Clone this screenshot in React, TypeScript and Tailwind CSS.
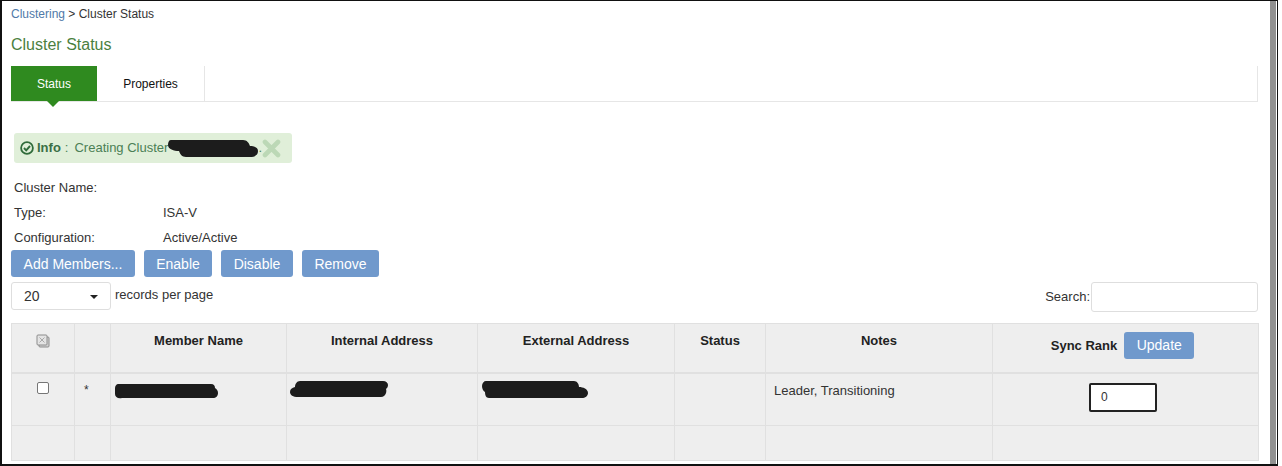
const buttons = [
  { label: "Add Members...", width: "w-[124px]" },
  { label: "Enable", width: "w-[68px]" },
  { label: "Disable", width: "w-[72px]" },
  { label: "Remove", width: "w-[77px]" },
];

const details = [
  { label: "Cluster Name:", value: "" },
  { label: "Type:", value: "ISA-V" },
  { label: "Configuration:", value: "Active/Active" },
];

const cellBorder = "border border-[#e0e0e0]";

function Scribble({ d, width, height }: { d: string; width: number; height: number }) {
  return (
    <svg width={width} height={height} viewBox={`0 0 ${width} ${height}`} className="block shrink-0">
      <path d={d} fill="#1c1c1c" />
    </svg>
  );
}

function SelectAllIcon() {
  return (
    <svg width="14" height="14" viewBox="0 0 14 14" className="block" fill="none">
      <rect x="3" y="3" width="10" height="10" rx="1" fill="#d2d2d2" stroke="#8c8c8c" />
      <rect x="1" y="1" width="10" height="10" rx="1" fill="#e4e4e4" stroke="#8c8c8c" />
      <path d="M3.5 3.5l5 5M8.5 3.5l-5 5" stroke="#a8a8a8" />
    </svg>
  );
}

function CheckCircle() {
  return (
    <svg width="14" height="14" viewBox="0 0 14 14" fill="none" className="block shrink-0 mr-[3px]">
      <circle cx="7" cy="7" r="5.9" stroke="#2f6b3a" strokeWidth="1.8" />
      <path d="M4 7l2.2 2.3L10 5" stroke="#2f6b3a" strokeWidth="1.9" />
    </svg>
  );
}

function CloseMark() {
  return (
    <svg width="19" height="19" viewBox="0 0 19 19" fill="none" className="block shrink-0">
      <path d="M3 3l13 13M16 3L3 16" stroke="#bcd8b6" strokeWidth="4.6" strokeLinecap="round" />
    </svg>
  );
}

export default function App() {
  return (
    <div className="w-[1282px] h-[466px] bg-white pr-[4px] overflow-hidden font-['Liberation_Sans',Arial,sans-serif]">
      <div className="h-[466px] flex border-t border-l-2 border-r border-b-2 border-[#111]">
        <div className="flex-1 min-w-0 pl-[9px] pr-[12px]">
          <div className="h-[25px] pt-[5px] text-[12px] leading-[16px] text-[#333]">
            <a className="text-[#4f79a8]">Clustering</a> &gt; Cluster Status
          </div>

          <h1 className="h-[40px] pt-[9px] text-[16px] leading-[20px] font-normal text-[#4b7f40]">Cluster Status</h1>

          {/* tabs */}
          <div className="relative flex h-[36px] border-b border-r border-[#e6e6e6] text-[12px]">
            <div className="w-[86px] h-[35px] flex items-center justify-center bg-[#2f8a1f] text-white">Status</div>
            <div className="w-[108px] h-[35px] flex items-center justify-center text-[#111] border-r border-[#e6e6e6]">
              Properties
            </div>
            <div className="absolute left-[36px] top-[35px] w-0 h-0 border-x-[6px] border-x-transparent border-t-[6px] border-t-[#2f8a1f]" />
          </div>

          <div className="pl-[3px] pt-[31px]">
            <div className="w-[278px] h-[30px] flex items-center pl-[6px] rounded-[3px] bg-[#e0efd9] text-[13px] text-[#4b8055]">
              <CheckCircle />
              <b className="text-[#3b6f46]">Info</b>
              <span className="ml-[4px] mr-[6px]">:</span>
              <span>Creating Cluster</span>
              <Scribble
                width={90}
                height={17}
                d="M3 0h72c4 0 6 3 7 6 3 0 8 1 8 5 0 4-3 6-8 6H18c-4 0-6-3-7-6-5 0-11-2-11-6 0-3 1-5 3-5z"
              />
              <span>.</span>
              <CloseMark />
            </div>

            <div className="pt-[12px] text-[13px] text-[#333]">
              {details.map((row) => (
                <div key={row.label} className="flex h-[25px] items-center">
                  <span className="w-[149px]">{row.label}</span>
                  <span>{row.value}</span>
                </div>
              ))}
            </div>
          </div>

          <div className="flex gap-[9px]">
            {buttons.map((btn) => (
              <button
                key={btn.label}
                className={`${btn.width} h-[27px] pt-[1px] rounded-[3px] bg-[#7099cc] text-[14px] text-white`}
              >
                {btn.label}
              </button>
            ))}
          </div>

          <div className="flex justify-between mt-[5px] text-[13px] text-[#333]">
            <div className="flex">
              <div className="w-[100px] h-[28px] flex items-center justify-between pl-[12px] pr-[12px] pt-[1px] rounded-[3px] border border-[#dedede] text-[14px]">
                20
                <span className="w-0 h-0 border-x-[4px] border-x-transparent border-t-[4px] border-t-[#222]" />
              </div>
              <span className="ml-[4px] mt-[4px] leading-[18px]">records per page</span>
            </div>
            <label className="flex">
              <span className="mt-[6px] leading-[18px]">Search:</span>
              <div className="ml-[1px] w-[167px] h-[30px] rounded-[3px] border border-[#dedede]" />
            </label>
          </div>

          <table className="mt-[11px] w-[1247px] table-fixed border-collapse bg-[#eeeeee] text-[13px] text-[#333]">
            <colgroup>
              <col className="w-[63px]" />
              <col className="w-[36px]" />
              <col className="w-[176px]" />
              <col className="w-[191px]" />
              <col className="w-[197px]" />
              <col className="w-[91px]" />
              <col className="w-[227px]" />
              <col className="w-[266px]" />
            </colgroup>
            <thead>
              <tr className="h-[49px] font-bold text-[13px] text-[#222]">
                <th className={`${cellBorder} border-b-2 align-top pt-[10px]`}>
                  <div className="flex justify-center">
                    <SelectAllIcon />
                  </div>
                </th>
                <th className={`${cellBorder} border-b-2`} />
                <th className={`${cellBorder} border-b-2 align-top pt-[7px]`}>Member Name</th>
                <th className={`${cellBorder} border-b-2 align-top pt-[7px]`}>Internal Address</th>
                <th className={`${cellBorder} border-b-2 align-top pt-[7px]`}>External Address</th>
                <th className={`${cellBorder} border-b-2 align-top pt-[7px]`}>Status</th>
                <th className={`${cellBorder} border-b-2 align-top pt-[7px]`}>Notes</th>
                <th className={`${cellBorder} border-b-2 align-top pt-[8px]`}>
                  <div className="flex items-center justify-center gap-[7px] pr-[6px]">
                    Sync Rank
                    <button className="w-[70px] h-[27px] rounded-[3px] bg-[#7099cc] text-[14px] font-normal text-white">
                      Update
                    </button>
                  </div>
                </th>
              </tr>
            </thead>
            <tbody>
              <tr className="h-[53px]">
                <td className={`${cellBorder} align-top pt-[8px]`}>
                  <div className="mx-auto w-[12px] h-[12px] rounded-[2px] border border-[#767676] bg-white" />
                </td>
                <td className={`${cellBorder} align-top pt-[7px] pl-[9px] text-[12px]`}>*</td>
                <td className={`${cellBorder} align-top pt-[9px] pl-[3px]`}>
                  <Scribble
                    width={104}
                    height={17}
                    d="M5 1h92c3 0 4 2 4 4 2 1 3 3 3 5 0 3-2 5-5 5H8c-4 1-7-1-7-4 0-2 0-3 0-5 0-3 1-5 4-5z"
                  />
                </td>
                <td className={`${cellBorder} align-top pt-[7px] pl-[3px]`}>
                  <Scribble
                    width={98}
                    height={18}
                    d="M10 0h83c3 0 5 2 5 4s-1 3-2 4c1 2 0 8-5 8H8c-5 0-8-2-8-5 0-3 2-4 5-5 0-3 2-6 5-6z"
                  />
                </td>
                <td className={`${cellBorder} align-top pt-[7px] pl-[4px]`}>
                  <Scribble
                    width={106}
                    height={18}
                    d="M4 0h88c3 0 5 3 5 6 4 0 9 2 9 6 0 3-3 5-6 5H7c-3 0-4-3-4-6C1 10 0 7 0 5c0-3 2-5 4-5z"
                  />
                </td>
                <td className={cellBorder} />
                <td className={`${cellBorder} align-top pt-[8px] pl-[8px] leading-[18px]`}>Leader, Transitioning</td>
                <td className={`${cellBorder} align-top pt-[9px]`}>
                  <div className="ml-[96px] w-[68px] h-[29px] flex items-center pl-[10px] rounded-[2px] border-2 border-[#222] bg-white text-[12px]">
                    0
                  </div>
                </td>
              </tr>
              <tr className="h-[35px]">
                {[0, 1, 2, 3, 4, 5, 6, 7].map((i) => (
                  <td key={i} className={cellBorder} />
                ))}
              </tr>
            </tbody>
          </table>
        </div>
        <div className="w-[6px] shrink-0 bg-[#919191] mr-[1px]" />
      </div>
    </div>
  );
}
